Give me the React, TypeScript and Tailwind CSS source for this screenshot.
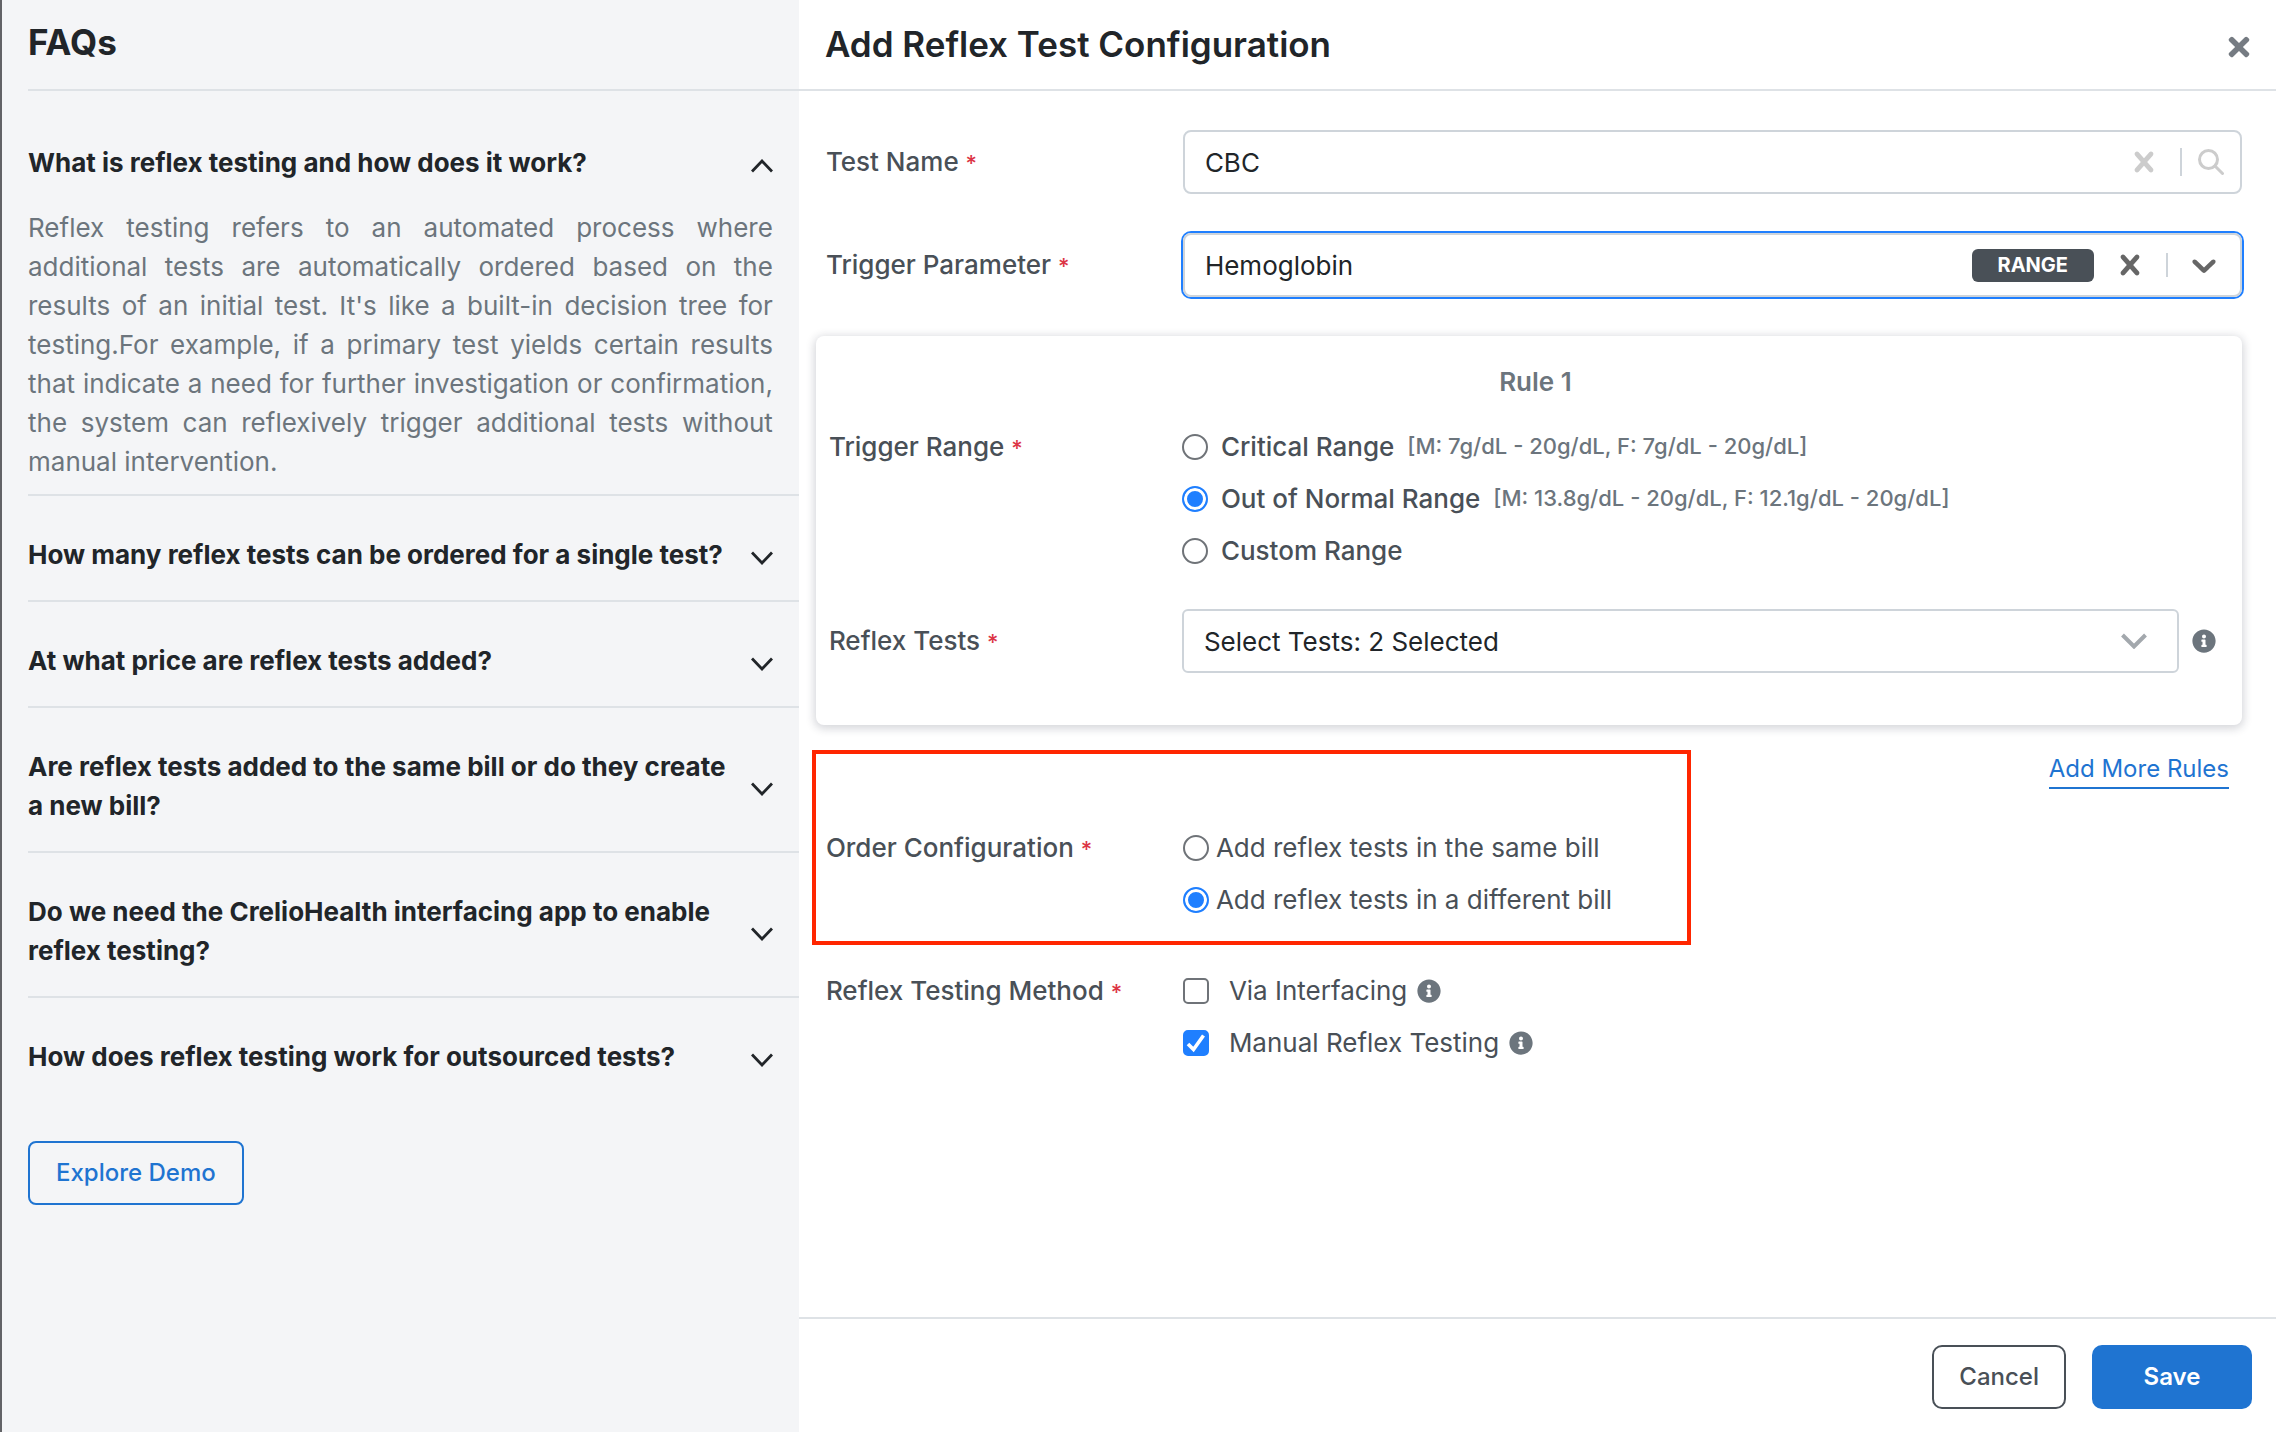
import { useState } from 'react';
import type { ReactNode } from 'react';
import { FaInfoCircle, FaTimes } from 'react-icons/fa';

const faqs = [
  {
    id: 1,
    question: 'What is reflex testing and how does it work?',
    answer:
      "Reflex testing refers to an automated process where additional tests are automatically ordered based on the results of an initial test. It's like a built-in decision tree for testing.For example, if a primary test yields certain results that indicate a need for further investigation or confirmation, the system can reflexively trigger additional tests without manual intervention.",
  },
  { id: 2, question: 'How many reflex tests can be ordered for a single test?', answer: '' },
  { id: 3, question: 'At what price are reflex tests added?', answer: '' },
  { id: 4, question: 'Are reflex tests added to the same bill or do they create a new bill?', answer: '' },
  { id: 5, question: 'Do we need the CrelioHealth interfacing app to enable reflex testing?', answer: '' },
  { id: 6, question: 'How does reflex testing work for outsourced tests?', answer: '' },
];

const ranges = [
  { id: 'critical', label: 'Critical Range', hint: '[M: 7g/dL - 20g/dL, F: 7g/dL - 20g/dL]' },
  { id: 'normal', label: 'Out of Normal Range', hint: '[M: 13.8g/dL - 20g/dL, F: 12.1g/dL - 20g/dL]' },
  { id: 'custom', label: 'Custom Range', hint: '' },
];

const orders = [
  { id: 'same', label: 'Add reflex tests in the same bill' },
  { id: 'different', label: 'Add reflex tests in a different bill' },
];

const methods = [
  { id: 'interfacing', label: 'Via Interfacing' },
  { id: 'manual', label: 'Manual Reflex Testing' },
];

const radioClass =
  'size-[26px] shrink-0 appearance-none rounded-full border-2 border-[#6f7378] bg-white checked:border-[#1f7fff] checked:bg-[#1f7fff] checked:shadow-[inset_0_0_0_3px_#fff]';

function Chevron({ open = false }: { open?: boolean }) {
  return (
    <svg viewBox="0 0 22 14" className="h-[14px] w-[22px] shrink-0" fill="none" stroke="#212529" strokeWidth="2.8">
      <path d={open ? 'M1 12.5 11 2l10 10.5' : 'M1 1.5 11 12 21 1.5'} />
    </svg>
  );
}

function CrossIcon() {
  return (
    <svg viewBox="0 0 20 20" className="size-10" fill="currentColor">
      <path d="M14.348 14.849c-0.469 0.469-1.229 0.469-1.697 0l-2.651-3.030-2.651 3.029c-0.469 0.469-1.229 0.469-1.697 0-0.469-0.469-0.469-1.229 0-1.697l2.758-3.15-2.759-3.152c-0.469-0.469-0.469-1.228 0-1.697s1.228-0.469 1.697 0l2.652 3.031 2.651-3.031c0.469-0.469 1.228-0.469 1.697 0s0.469 1.229 0 1.697l-2.758 3.152 2.758 3.15c0.469 0.469 0.469 1.229 0 1.698z" />
    </svg>
  );
}

function DownIcon() {
  return (
    <svg viewBox="0 0 20 20" className="size-10" fill="currentColor">
      <path d="M4.516 7.548c0.436-0.446 1.043-0.481 1.576 0l3.908 3.747 3.908-3.747c0.533-0.481 1.141-0.446 1.574 0 0.436 0.445 0.408 1.197 0 1.615-0.406 0.418-4.695 4.502-4.695 4.502-0.217 0.223-0.502 0.335-0.787 0.335s-0.57-0.112-0.789-0.335c0 0-4.287-4.084-4.695-4.502s-0.436-1.17 0-1.615z" />
    </svg>
  );
}

function Required({ children }: { children: ReactNode }) {
  return (
    <>
      {children} <span className="text-[22px] text-[#dc3545]">*</span>
    </>
  );
}

export default function App() {
  const [openFaq, setOpenFaq] = useState(1);
  const [range, setRange] = useState('normal');
  const [order, setOrder] = useState('different');
  const [checked, setChecked] = useState<string[]>(['manual']);

  const toggle = (id: string) =>
    setChecked(checked.includes(id) ? checked.filter((c) => c !== id) : [...checked, id]);

  return (
    <div className="flex min-h-screen bg-white font-['Inter',sans-serif] text-[26px] leading-[39px] text-[#212529]">
      <aside className="w-[35.1%] shrink-0 border-l-2 border-[#626367] bg-[#f4f5f7] pl-[26px]">
        <header className="flex h-[91px] items-center border-b-2 border-[#dee2e6] pb-1">
          <h2 className="text-[35px] font-bold">FAQs</h2>
        </header>

        <div className="pt-[13px]">
          {faqs.map((faq) => (
            <section key={faq.id} className="border-b-2 border-[#dee2e6] pt-[39px] last:border-b-0">
              <h3>
                <button
                  type="button"
                  aria-expanded={openFaq === faq.id}
                  onClick={() => setOpenFaq(openFaq === faq.id ? 0 : faq.id)}
                  className="flex w-full items-center justify-between gap-2 pr-[26px] pb-[26px] text-left font-bold"
                >
                  <span>{faq.question}</span>
                  <span className="pt-1.5">
                    <Chevron open={openFaq === faq.id} />
                  </span>
                </button>
              </h3>
              {openFaq === faq.id && faq.answer && (
                <p className="pr-[26px] pb-[13px] text-justify text-[#6c757d]">{faq.answer}</p>
              )}
            </section>
          ))}
        </div>

        <button
          type="button"
          className="mt-[39px] h-16 rounded-lg border-2 border-[#1f74d1] px-[26px] text-2xl font-medium text-[#1f74d1]"
        >
          Explore Demo
        </button>
      </aside>

      <main className="flex min-w-0 flex-1 flex-col">
        <header className="flex h-[91px] items-center justify-between border-b-2 border-[#dee2e6] pr-[22px] pl-[26px]">
          <h1 className="text-[35px] font-semibold">Add Reflex Test Configuration</h1>
          <button type="button" aria-label="Close" className="pt-1 text-[#757b82]">
            <FaTimes className="size-[30px]" />
          </button>
        </header>

        <form className="flex flex-1 flex-col pr-[34px] pl-[27px] pt-[39px]" onSubmit={(e) => e.preventDefault()}>
          <div className="grid grid-cols-[357px_1fr] items-center gap-y-[39px]">
            <label htmlFor="test-name" className="font-medium text-[#495057]">
              <Required>Test Name</Required>
            </label>
            <div className="flex h-16 items-center rounded-lg border-2 border-[#ced4da] pr-4 pl-5 text-[#ccc]">
              <input id="test-name" defaultValue="CBC" className="min-w-0 flex-1 text-[#212529] outline-none" />
              <button type="button" aria-label="Clear test name">
                <CrossIcon />
              </button>
              <span className="mx-4 h-7 w-[2px] bg-[#ced4da]" />
              <svg viewBox="0 0 26 26" className="size-[26px]" fill="none" stroke="currentColor" strokeWidth="3">
                <circle cx="10.5" cy="10.5" r="9" />
                <path d="m17 17 7.5 7.5" strokeLinecap="round" />
              </svg>
            </div>

            <label htmlFor="trigger-parameter" className="font-medium text-[#495057]">
              <Required>Trigger Parameter</Required>
            </label>
            <div className="flex h-16 items-center rounded-lg border-2 border-[#ced4da] pr-4 pl-5 text-[#666] ring-2 ring-[#1f7fff]">
              <select id="trigger-parameter" className="min-w-0 flex-1 appearance-none text-[#212529] outline-none">
                <option>Hemoglobin</option>
              </select>
              <span className="flex h-[33px] items-center rounded-md bg-[#495057] px-[26px] text-[20px] font-bold text-white">
                RANGE
              </span>
              <button type="button" aria-label="Clear trigger parameter" className="ml-4">
                <CrossIcon />
              </button>
              <span className="mx-4 h-6 w-[2px] bg-[#ced4da]" />
              <DownIcon />
            </div>
          </div>

          <section className="mt-[39px] -ml-[10px] rounded-lg bg-white pt-[26px] pb-[52px] pl-[13px] shadow-[0_2px_8px_2px_rgba(33,37,60,0.18)]">
            <h2 className="text-center font-semibold text-[#6c757d]">Rule 1</h2>
            <div className="mt-[26px] grid grid-cols-[353px_1fr] items-start gap-y-[39px]">
              <span id="trigger-range" className="font-medium text-[#495057]">
                <Required>Trigger Range</Required>
              </span>
              <div role="radiogroup" aria-labelledby="trigger-range" className="flex flex-col gap-[13px]">
                {ranges.map((item) => (
                  <label key={item.id} className="flex items-center gap-[13px] font-medium text-[#495057]">
                    <input
                      type="radio"
                      name="range"
                      checked={range === item.id}
                      onChange={() => setRange(item.id)}
                      className={radioClass}
                    />
                    {item.label}
                    {item.hint && <span className="text-[22px] text-[#6c757d]">{item.hint}</span>}
                  </label>
                ))}
              </div>

              <label htmlFor="reflex-tests" className="self-center font-medium text-[#495057]">
                <Required>Reflex Tests</Required>
              </label>
              <div className="flex items-center gap-[13px] pr-[26px]">
                <div className="flex h-16 min-w-0 flex-1 items-center rounded-md border-2 border-[#ced4da] pr-[30px] pl-5">
                  <select id="reflex-tests" className="min-w-0 flex-1 appearance-none outline-none">
                    <option>Select Tests: 2 Selected</option>
                  </select>
                  <svg viewBox="0 0 26 16" className="h-4 w-[26px]" fill="none" stroke="#a3a8ad" strokeWidth="4">
                    <path d="m1.5 2 11.5 11.5L24.500 2" />
                  </svg>
                </div>
                <FaInfoCircle className="size-6 text-[#6c757d]" />
              </div>
            </div>
          </section>

          <div className="mt-[26px] flex justify-end pr-[13px]">
            <a href="#rules" className="border-b-2 border-[#1f74d1] text-2xl leading-[36px] text-[#1f74d1]">
              Add More Rules
            </a>
          </div>

          <div className="relative mt-[39px] grid grid-cols-[357px_1fr] items-start">
            <span id="order-config" className="font-medium text-[#495057]">
              <Required>Order Configuration</Required>
            </span>
            <div role="radiogroup" aria-labelledby="order-config" className="flex flex-col gap-[13px]">
              {orders.map((item) => (
                <label key={item.id} className="flex items-center gap-[7px] text-[#495057]">
                  <input
                    type="radio"
                    name="order"
                    checked={order === item.id}
                    onChange={() => setOrder(item.id)}
                    className={radioClass}
                  />
                  {item.label}
                </label>
              ))}
            </div>
            {/* red callout over the order section */}
            <div className="pointer-events-none absolute -top-[78px] -bottom-[26px] -left-[14px] w-[879px] border-4 border-[#ff2600]" />
          </div>

          <div className="mt-[52px] mb-[39px] grid grid-cols-[357px_1fr] items-start">
            <span id="method" className="font-medium text-[#495057]">
              <Required>Reflex Testing Method</Required>
            </span>
            <div role="group" aria-labelledby="method" className="flex flex-col gap-[13px]">
              {methods.map((item) => (
                <div key={item.id} className="flex items-center gap-[10px]">
                  <label className="relative flex items-center gap-5 text-[#495057]">
                    <input
                      type="checkbox"
                      checked={checked.includes(item.id)}
                      onChange={() => toggle(item.id)}
                      className="peer size-[26px] appearance-none rounded-[5px] border-2 border-[#6f7378] bg-white checked:border-[#1f7fff] checked:bg-[#1f7fff]"
                    />
                    <svg
                      viewBox="0 0 26 26"
                      className="absolute left-0 hidden size-[26px] peer-checked:block"
                      fill="none"
                      stroke="#fff"
                      strokeWidth="3.6"
                    >
                      <path d="m5 14 5.500 5.500L20.500 5.500" />
                    </svg>
                    {item.label}
                  </label>
                  <FaInfoCircle className="size-6 text-[#6c757d]" />
                </div>
              ))}
            </div>
          </div>
        </form>

        <footer className="flex justify-end gap-[26px] border-t-2 border-[#dee2e6] px-6 pt-[26px] pb-[23px] text-2xl font-medium">
          <button type="button" className="h-16 rounded-[10px] border-2 border-[#495057] px-[25px] text-[#495057]">
            Cancel
          </button>
          <button type="submit" className="h-16 w-40 rounded-[10px] bg-[#1f74d1] font-semibold text-white">
            Save
          </button>
        </footer>
      </main>
    </div>
  );
}
